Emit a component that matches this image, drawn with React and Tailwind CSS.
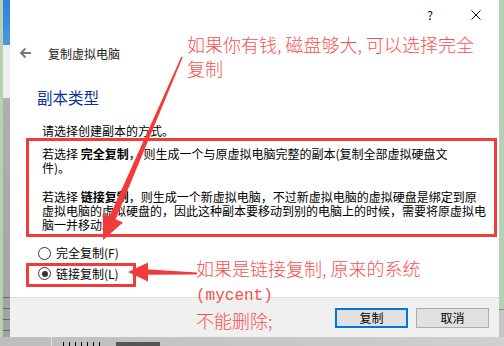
import React from 'react';

const cjk = "font-['Noto_Sans_CJK_SC',sans-serif]";

const Radio = ({ checked }) => (
  <span className="w-[13px] h-[13px] rounded-full border border-[#333] bg-white flex items-center justify-center shrink-0">
    {checked && <span className="w-[6px] h-[6px] rounded-full bg-[#333]" />}
  </span>
);

const Arrows = () => (
  <svg className="absolute inset-0 pointer-events-none" width="504" height="346" viewBox="0 0 504 346">
    {/* long arrow from the top note down to the description box */}
    <polygon points="182.7,57.3 181.3,56.7 108.6,218.4 114.8,221.2" fill="#f23a3a" />
    <polygon points="103,240 123,222.5 102.8,213.7" fill="#f23a3a" />
    {/* short arrow pointing at the linked-copy radio */}
    <polygon points="146,269.3 146,274.7 197,274.4 197,272.6" fill="#f23a3a" />
    <polygon points="128,272 148,262.5 148,281.5" fill="#f23a3a" />
  </svg>
);

export default function App() {
  return (
    <div className={`w-[504px] h-[346px] relative overflow-hidden flex flex-col bg-[#c6c6c6] ${cjk}`}>
      <div className="flex h-[337px]">
        {/* desktop behind, left side */}
        <div className="w-[10px] flex">
          <div className="w-[3px] bg-[#b6cfb5]" />
          <div className="flex-1 flex flex-col">
            <div className="h-[45px] bg-gradient-to-b from-[#2c82d8] to-[#4c97e2]" />
            <div className="h-[53px] bg-[#eeeeee]" />
            <div className="flex-1 bg-gradient-to-b from-[#b0b0b0] to-[#a2a2a2] flex flex-col justify-end pb-[6px] gap-[10px]">
              <div className="h-px bg-[#6a6a6a]" />
              <div className="h-px bg-[#6a6a6a]" />
              <div className="h-px bg-[#6a6a6a]" />
              <div className="h-px bg-[#6a6a6a]" />
            </div>
          </div>
        </div>

        {/* dialog */}
        <div className="w-[489px] bg-white flex flex-col">
          <div className="h-[30px] flex justify-end">
            <div className="w-[46px] flex items-center justify-center text-[12px] text-black">?</div>
            <div className="w-[46px] flex items-center justify-center">
              <svg width="10" height="10" viewBox="0 0 10 10">
                <path d="M0.5 0.5 L9.5 9.5 M9.5 0.5 L0.5 9.5" stroke="#111" strokeWidth="1" />
              </svg>
            </div>
          </div>

          <div className="mt-[8px] h-[30px] flex items-center pl-[9px]">
            <svg width="13" height="12" viewBox="0 0 13 12">
              <path d="M12 6 H2 M6.5 1.5 L2 6 L6.5 10.5" stroke="#7a7a7a" strokeWidth="2" fill="none" />
            </svg>
            <span className="ml-[16px] text-[12px] leading-[14px] text-[#1a1a1a] mt-[2px]">复制虚拟电脑</span>
          </div>

          <div className="mt-[18px] pl-[27px] text-[15.5px] leading-[22px] text-[#0a3398]">副本类型</div>

          <div className="mt-[16px] pl-[32px] text-[12px] leading-[14px] text-black">请选择创建副本的方式。</div>

          <div className="ml-[16px] w-[471px] h-[99px] border-[3px] border-[#f23b3b] pl-[13px] pt-[6px] text-[12px] leading-[14px] text-black whitespace-nowrap">
            <div>
              若选择 <b>完全复制</b>， 则生成一个与原虚拟电脑完整的副本(复制全部虚拟硬盘文
              <br />
              件)。
            </div>
            <div className="mt-[15px]">
              若选择 <b>链接复制</b>，则生成一个新虚拟电脑，不过新虚拟电脑的虚拟硬盘是绑定到原
              <br />
              虚拟电脑的虚拟硬盘的，因此这种副本要移动到别的电脑上的时候，需要将原虚拟电
              <br />
              脑一并移动。
            </div>
          </div>

          <div className="mt-[9px] h-[14px] flex items-center pl-[28px] gap-[5px] text-[12px] leading-[14px] text-black">
            <Radio />
            <span>完全复制(F)</span>
          </div>

          <div className="mt-[3px] ml-[16px] w-[110px] h-[24px] border-[3px] border-[#f23b3b] flex items-center pl-[9px] pb-[3px] gap-[5px] text-[12px] leading-[14px] text-black">
            <Radio checked />
            <span>链接复制(L)</span>
          </div>

          <div className="flex-1" />

          <div className="h-[40px] bg-[#f0f0f0] border-t border-[#dfdfdf] flex justify-end items-start pt-[10px] pr-[10px] gap-[8px]">
            <button className="w-[73px] h-[20px] border-2 border-[#0078d7] bg-[#e1e1e1] text-[12px] leading-[14px] text-black flex items-center justify-center">复制</button>
            <button className="w-[73px] h-[20px] border border-[#adadad] bg-[#e1e1e1] text-[12px] leading-[14px] text-black flex items-center justify-center">取消</button>
          </div>
        </div>

        {/* desktop behind, right side */}
        <div className="flex-1 flex flex-col bg-[#b6cfb5]">
          <div className="h-[309px]" />
          <div className="h-px bg-[#8a8a8a]" />
          <div className="flex-1 bg-[#c4c4c4]" />
        </div>
      </div>

      {/* strip below the dialog */}
      <div className="flex-1 flex items-end bg-gradient-to-r from-[#bdbdbd] to-[#d0d0d0]">
        <div className="w-[52px] h-full border-r border-[#e0e0e0]" />
        <div className="ml-[11px] flex gap-[5px] items-end h-full pt-[5px]">
          <div className="w-px h-full bg-black" />
          <div className="w-px h-full bg-black" />
          <div className="w-px h-full bg-black" />
          <div className="w-px h-full bg-black" />
          <div className="w-px h-full bg-black" />
          <div className="w-px h-full bg-black" />
          <div className="w-px h-full bg-black" />
        </div>
        <div className="ml-[16px] w-[44px] h-[4px] bg-[#555]" />
      </div>

      <Arrows />

      {/* red annotations */}
      <div className="absolute left-[187px] top-[32px] text-[18px] leading-[24px] font-light text-[#f75050] whitespace-nowrap">
        如果你有钱, 磁盘够大, 可以选择完全
        <br />
        复制
      </div>
      <div className="absolute left-[196px] top-[256px] text-[18px] leading-[24px] font-light text-[#f75050] whitespace-nowrap">
        如果是链接复制, 原来的系统
        <br />
        <span className="font-['Liberation_Mono',monospace] text-[16px]">(mycent)</span>
        <br />
        不能删除;
      </div>
    </div>
  );
}
